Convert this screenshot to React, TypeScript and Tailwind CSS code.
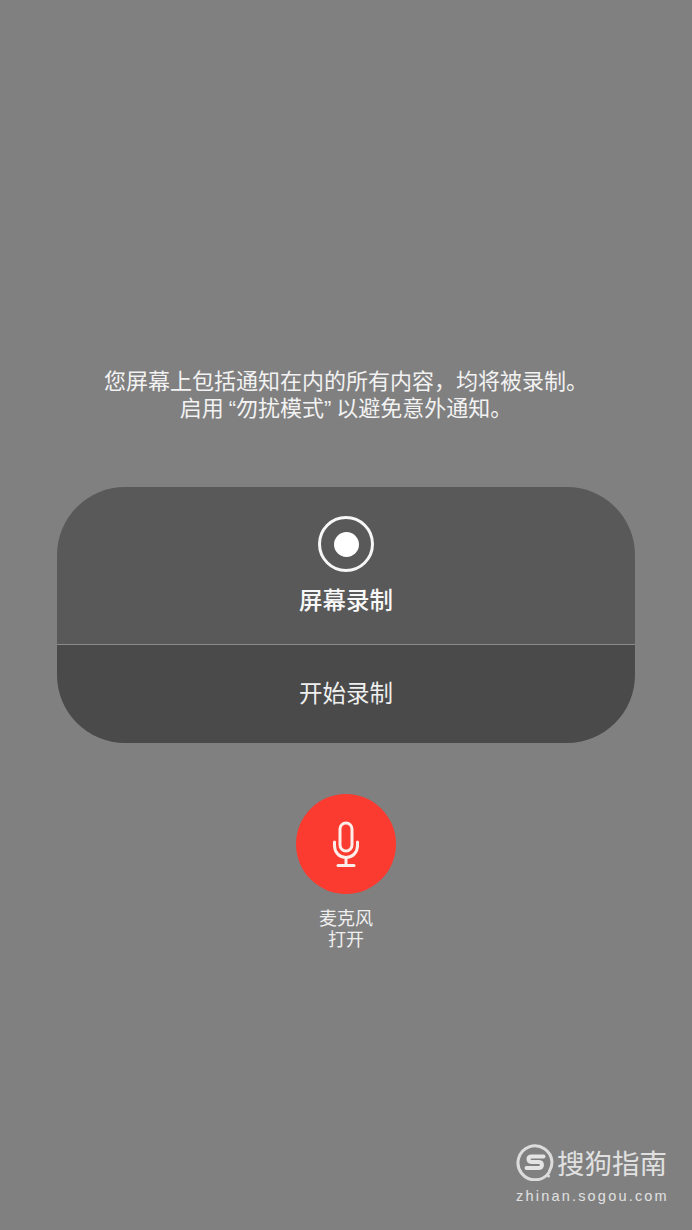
const cjk = "font-['Noto_Sans_CJK_SC','Noto_Sans',sans-serif]";

function SogouLogo() {
  return (
    <svg width="38" height="38" viewBox="0 0 38 38" fill="none" className="shrink-0">
      <path
        d="M33 29.500A17 17 0 1 1 36 19c0 3.600-1 6.500-2.500 9"
        stroke="#dcdcdc"
        strokeWidth="3"
        strokeLinecap="round"
      />
      <path
        d="M27.500 13.500H15.500c-4 0-4 5 0 5.500h7.500c4 .5 4 6-.5 6H10.500"
        stroke="#e4e4e4"
        strokeWidth="4"
        strokeLinecap="round"
      />
      <circle cx="32.500" cy="33" r="1.500" fill="#dcdcdc" />
    </svg>
  );
}

function MicIcon() {
  return (
    <svg width="30" height="48" viewBox="0 0 30 48" fill="none" stroke="#fdeeea" strokeWidth="3" strokeLinecap="round">
      <rect x="9" y="3" width="12" height="28" rx="6" />
      <path d="M3.500 22v3.500c0 7 5 12 11.500 12s11.500-5 11.500-12V22" />
      <path d="M15 37.500V45" />
      <path d="M7 45.500h16" />
    </svg>
  );
}

export default function App() {
  const quote = "font-['Liberation_Sans',sans-serif] leading-none";
  return (
    <div className={`relative h-[1230px] w-[692px] overflow-hidden bg-[#808080] text-white ${cjk}`}>
      <div className="flex flex-col items-center pt-[366px]">
        <div className="text-center text-[22px] leading-[27px] font-normal text-[#f2f2f2]">
          <div className="h-[27px]">您屏幕上包括通知在内的所有内容，均将被录制。</div>
          <div className="h-[27px]">
            {"启用"}
            <span className={`ml-[5px] ${quote}`}>“</span>
            {"勿扰模式"}
            <span className={`mr-[5px] ${quote}`}>”</span>
            {"以避免意外通知。"}
          </div>
        </div>

        <div className="mt-[67px] h-[256px] w-[578px] overflow-hidden rounded-[68px]">
          <div className="flex h-[158px] flex-col items-center border-b border-[#8a8a8a] bg-[#595959] pt-[29px]">
            <div className="flex h-[56px] w-[56px] items-center justify-center rounded-full border-[3px] border-[#f7f7f7]">
              <div className="h-[25px] w-[25px] rounded-full bg-white" />
            </div>
            <span className="mt-[12px] text-[23.500px] leading-[30px] font-medium text-[#f8f8f8]">屏幕录制</span>
          </div>
          <div className="flex h-[98px] items-center justify-center bg-[#4a4a4a] pb-[2px] text-[23.500px] font-normal text-[#efefef]">
            开始录制
          </div>
        </div>

        <div className="mt-[51px] flex h-[100px] w-[100px] items-center justify-center rounded-full bg-[#fb3a30]">
          <MicIcon />
        </div>
        <div className="mt-[13px] text-center text-[18px] leading-[21px] text-[#efefef]">
          <div>麦克风</div>
          <div>打开</div>
        </div>
      </div>

      <div className="absolute top-[1142px] left-[516px] flex w-[152px] flex-col text-[#e0e0e0]">
        <div className="flex items-center gap-[3px]">
          <SogouLogo />
          <span className="text-[27.500px] leading-[40px] font-normal whitespace-nowrap">搜狗指南</span>
        </div>
        <span className="mt-[6px] font-['Liberation_Sans',sans-serif] text-[14.500px] leading-[16px] tracking-[2.200px] whitespace-nowrap">
          zhinan.sogou.com
        </span>
      </div>
    </div>
  );
}
